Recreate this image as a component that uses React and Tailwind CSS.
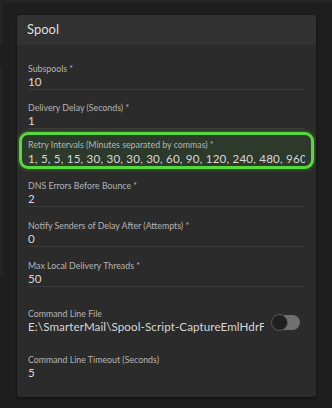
const font = { fontFamily: 'Lato, "Open Sans", sans-serif' };

function Field({ label, value, underline = true, className = '' }) {
    return (
        <div className={`flex flex-col ${underline ? 'border-b border-[#3b3b3b]' : ''} ${className}`}>
            <span className="text-[8.8px] leading-[13px] text-[#b5b5b5]">{label}</span>
            <span className="text-[11.6px] leading-[14px] tracking-[0.1px] text-[#d8d8d8] whitespace-nowrap overflow-hidden">{value}</span>
        </div>
    );
}

export default function App() {
    return (
        <div className="w-[332px] h-[408px] bg-[#1e1e1e] overflow-hidden relative" style={font}>
            <div className="absolute top-0 left-[3px] right-0 h-[3px] bg-[#242424] rounded-bl" />
            <div className="absolute top-0 left-0 w-[3px] h-[45px] bg-[#242424]" />
            <div className="absolute top-[66px] left-0 w-[3px] h-[210px] bg-[#242424]" />

            <div className="absolute left-[17px] top-[15px] w-[299px] h-[382px] bg-[#2b2b2b] rounded-[3px] shadow-[0_1px_3px_rgba(0,0,0,0.5)] overflow-hidden">
                <div className="h-[30px] bg-[#323232] flex items-center px-[10px]">
                    <span className="text-[13px] text-[#dedede]">Spool</span>
                </div>

                <div className="flex flex-col px-[11px] pt-[17px]">
                    <Field label="Subspools *" value="10" />
                    <Field label="Delivery Delay (Seconds) *" value="1" className="mt-[11px]" />

                    <div className="mt-[3px] -mx-[9px] border-[3px] border-[#57d83c] rounded-[9px] bg-[#2d392a] px-[6px] pt-[4px] shadow-[0_0_4px_rgba(87,216,60,0.5)]">
                        <div className="flex flex-col">
                            <span className="text-[8.8px] leading-[12px] text-[#b5b5b5]">Retry Intervals (Minutes separated by commas) *</span>
                            <span className="text-[11.6px] leading-[15px] tracking-[0.2px] text-[#d8d8d8] whitespace-nowrap overflow-hidden">1, 5, 5, 15, 30, 30, 30, 30, 60, 90, 120, 240, 480, 960, 1440</span>
                        </div>
                    </div>

                    <Field label="DNS Errors Before Bounce *" value="2" className="mt-[10px]" />
                    <Field label="Notify Senders of Delay After (Attempts) *" value="0" className="mt-[12px]" />
                    <Field label="Max Local Delivery Threads *" value="50" className="mt-[12px]" />

                    <div className="mt-[20px] flex items-center">
                        <div className="w-[236px]">
                            <Field label="Command Line File" value="E:\SmarterMail\Spool-Script-CaptureEmlHdrFile.bat" underline={false} />
                        </div>
                        <div className="ml-auto mr-[5px] mt-[4px] relative w-[28px] h-[15px] rounded-full bg-[#707070]">
                            <div className="absolute left-[-1px] top-[-1px] w-[17px] h-[17px] rounded-full bg-[#202020] border border-[#5a5a5a]" />
                        </div>
                    </div>

                    <Field label="Command Line Timeout (Seconds)" value="5" underline={false} className="mt-[19px]" />
                </div>
            </div>
        </div>
    );
}
